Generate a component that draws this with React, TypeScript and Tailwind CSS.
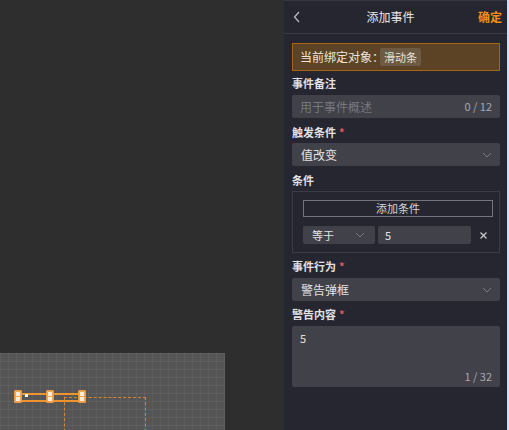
import React from "react";

const font = { fontFamily: '"Noto Sans CJK SC", "Noto Sans", sans-serif' };

function Chevron() {
  return (
    <svg width="10" height="6" viewBox="0 0 10 6" className="shrink-0">
      <path d="M1 1 L5 5 L9 1" fill="none" stroke="#7a7a82" strokeWidth="1" />
    </svg>
  );
}

function Label({ text, required }: { text: string; required?: boolean }) {
  return (
    <div className="h-[20px] flex items-center text-[11px] font-bold text-[#e2e2e6] leading-none">
      {text}
      {required && <span className="ml-[3px] text-[#e0585a] text-[11px]">*</span>}
    </div>
  );
}

function Handle() {
  return (
    <div className="w-[8px] h-[13px] bg-[#f2a552] rounded-[1px] flex flex-col items-center justify-center gap-[1px] border border-[#e89a45]">
      <div className="w-[4px] h-[4px] bg-[#f7ece0]" />
      <div className="w-[4px] h-[4px] bg-[#f7ece0]" />
    </div>
  );
}

export default function App() {
  return (
    <div className="w-[509px] h-[430px] flex overflow-hidden bg-[#2e2e2e]" style={font}>
      {/* canvas */}
      <div className="w-[284px] h-full flex flex-col justify-end">
        <div
          className="relative w-[225px] h-[77px] bg-[#555555]"
          style={{
            backgroundImage:
              "linear-gradient(to right, rgba(255,255,255,0.05) 1px, transparent 1px), linear-gradient(to bottom, rgba(255,255,255,0.05) 1px, transparent 1px)",
            backgroundSize: "8px 8px",
          }}
        >
          <div className="absolute left-[64px] top-[44px] w-[82px] h-[40px] border-t border-l border-r border-dashed border-[#d9862a]" />
          <div className="absolute left-[18px] top-[40px] w-[64px] h-[1.5px] bg-[#f0932d]" />
          <div className="absolute left-[18px] top-[47px] w-[64px] h-[1.5px] bg-[#f0932d]" />
          <div className="absolute left-[14px] top-[37px]"><Handle /></div>
          <div className="absolute left-[46px] top-[37px]"><Handle /></div>
          <div className="absolute left-[78px] top-[37px]"><Handle /></div>
          <div className="absolute left-[25px] top-[41px] w-[3px] h-[3px] bg-[#eeeeee]" />
        </div>
      </div>

      {/* panel */}
      <div className="w-[223px] h-full bg-[#262630] flex flex-col border-t border-[#363640]">
        <div className="h-[33px] border-b border-[#3a3a44] flex items-center px-2 relative">
          <svg width="8" height="12" viewBox="0 0 8 12" className="ml-[1px]">
            <path d="M6 1 L1.5 6 L6 11" fill="none" stroke="#b8b8be" strokeWidth="1.3" />
          </svg>
          <div className="flex-1 text-center text-[12px] text-[#e6e6ea] pl-[2px]">添加事件</div>
          <div className="text-[12px] font-bold text-[#f0901a] mr-[-3px]">确定</div>
        </div>

        <div className="pl-2 pr-[7px] flex flex-col">
          <div className="mt-[9px] h-[28px] border border-[#a8650f] bg-[#5d4326] flex items-center px-[7px]">
            <span className="text-[12px] text-[#ece6dc]">当前绑定对象：</span>
            <span className="ml-[-4px] h-[18px] px-[4px] flex items-center bg-[#6d5a43] text-[11px] text-[#e8e2d8] rounded-[2px]">滑动条</span>
          </div>

          <div className="mt-[2px]"><Label text="事件备注" /></div>
          <div className="mt-[2px] h-[23px] bg-[#414149] rounded-[2px] flex items-center justify-between px-[8px]">
            <span className="text-[12px] text-[#77777f]">用于事件概述</span>
            <span className="text-[11px] text-[#a8a8ae]">0 / 12</span>
          </div>

          <div className="mt-[4px]"><Label text="触发条件" required /></div>
          <div className="mt-[1px] h-[23px] bg-[#414149] rounded-[2px] flex items-center justify-between pl-[9px] pr-[8px]">
            <span className="text-[12px] text-[#e2e2e6]">值改变</span>
            <Chevron />
          </div>

          <div className="mt-[4px]"><Label text="条件" /></div>
          <div className="mt-[1px] border border-[#3c3c47] pl-[10px] pr-[6px] pt-[8px] pb-[8px]">
            <div className="h-[17px] border border-[#74747a] flex items-center justify-center text-[11px] text-[#d4d4d8]">添加条件</div>
            <div className="mt-[9px] h-[18px] flex items-center">
              <div className="w-[72px] h-full bg-[#414149] rounded-[2px] flex items-center justify-between pl-[9px] pr-[10px]">
                <span className="text-[11px] text-[#e2e2e6]">等于</span>
                <Chevron />
              </div>
              <div className="ml-[3px] w-[93px] h-full bg-[#414149] rounded-[2px] flex items-center pl-[7px]">
                <span className="text-[11px] text-[#e2e2e6]">5</span>
              </div>
              <div className="flex-1 flex justify-center pl-[3px]">
                <svg width="7" height="7" viewBox="0 0 7 7">
                  <path d="M0.5 0.5 L6.5 6.5 M6.5 0.5 L0.5 6.5" stroke="#c8c8cc" strokeWidth="1.3" />
                </svg>
              </div>
            </div>
          </div>

          <div className="mt-[3px]"><Label text="事件行为" required /></div>
          <div className="mt-[2px] h-[23px] bg-[#414149] rounded-[2px] flex items-center justify-between pl-[9px] pr-[8px]">
            <span className="text-[12px] text-[#e2e2e6]">警告弹框</span>
            <Chevron />
          </div>

          <div className="mt-[3px]"><Label text="警告内容" required /></div>
          <div className="mt-[2px] h-[61px] bg-[#414149] rounded-[2px] flex flex-col justify-between px-[8px] pt-[4px] pb-[3px]">
            <span className="text-[11px] text-[#e2e2e6]">5</span>
            <span className="self-end text-[11px] text-[#a8a8ae]">1 / 32</span>
          </div>
        </div>
      </div>
      <div className="w-[2px] h-full bg-[#cfe0f4]" />
    </div>
  );
}
